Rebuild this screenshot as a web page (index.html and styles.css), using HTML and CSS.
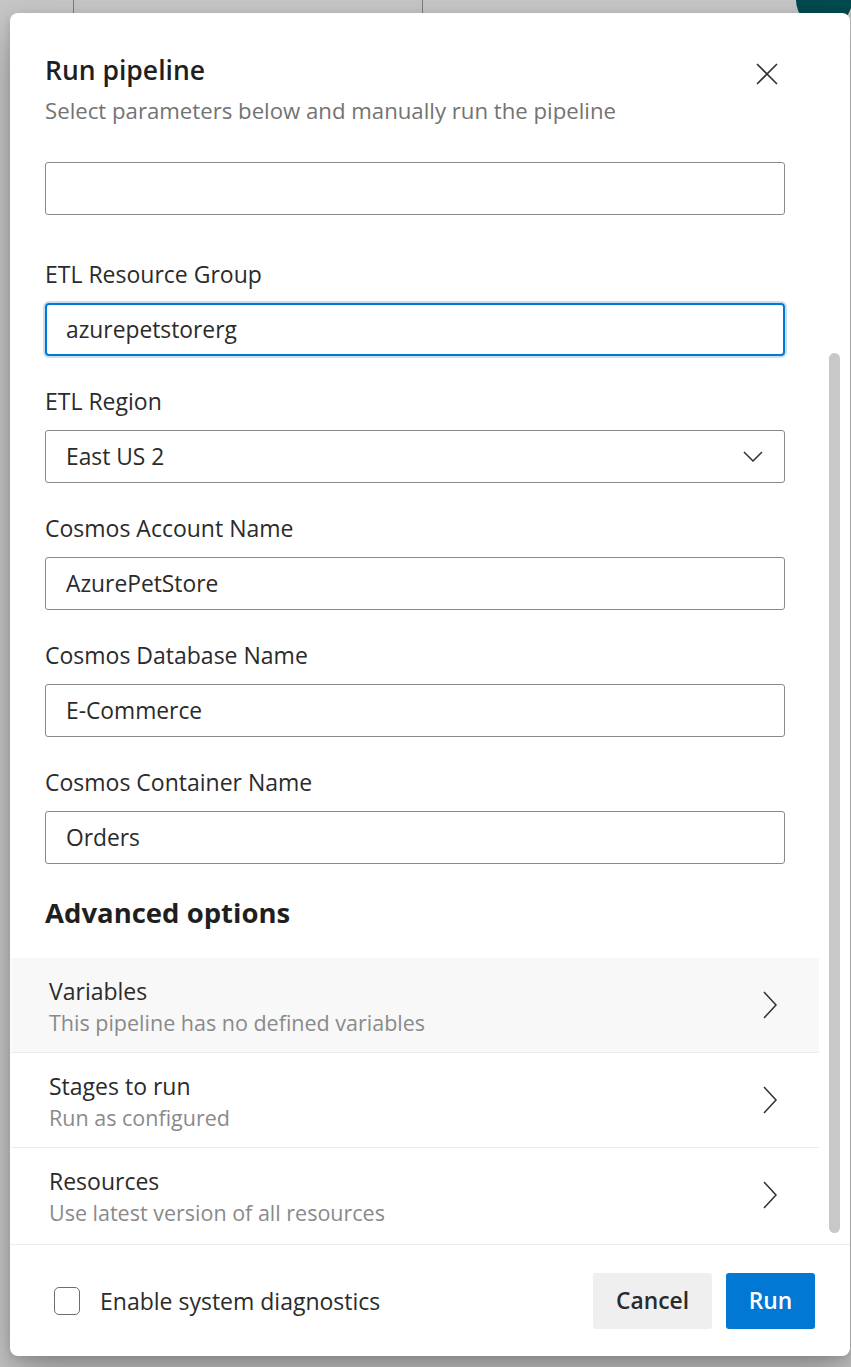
FILE: index.html
```html
<!DOCTYPE html>
<html lang="en">
<head>
<meta charset="utf-8">
<title>Run pipeline</title>
<link rel="stylesheet" href="styles.css">
</head>
<body>
<div class="backdrop">
  <div class="bg-card"></div>
  <div class="bg-avatar"></div>
</div>
<div class="modal" role="dialog" aria-labelledby="dlg-title">
  <header class="modal-header">
    <div class="titles">
      <h1 id="dlg-title" class="title">Run pipeline</h1>
      <p class="subtitle">Select parameters below and manually run the pipeline</p>
    </div>
    <button class="close" aria-label="Close">
      <svg width="22" height="22" viewBox="0 0 22 22"><path d="M1 1 L21 21 M21 1 L1 21" stroke="#323130" stroke-width="1.6" fill="none"/></svg>
    </button>
  </header>

  <div class="modal-body">
    <div class="fields">
      <div class="field first">
        <div class="input"></div>
      </div>
      <div class="field">
        <label class="label">ETL Resource Group</label>
        <div class="input focused">azurepetstorerg</div>
      </div>
      <div class="field">
        <label class="label">ETL Region</label>
        <div class="input select">East US 2
          <svg class="chev-down" width="20" height="11" viewBox="0 0 20 11"><path d="M1 1 L10 10 L19 1" stroke="#323130" stroke-width="1.5" fill="none"/></svg>
        </div>
      </div>
      <div class="field">
        <label class="label">Cosmos Account Name</label>
        <div class="input">AzurePetStore</div>
      </div>
      <div class="field">
        <label class="label">Cosmos Database Name</label>
        <div class="input">E-Commerce</div>
      </div>
      <div class="field">
        <label class="label">Cosmos Container Name</label>
        <div class="input">Orders</div>
      </div>
      <h2 class="section">Advanced options</h2>
    </div>
    <ul class="rows">
      <li class="row hover">
        <div class="row-text">
          <div class="row-title">Variables</div>
          <div class="row-sub">This pipeline has no defined variables</div>
        </div>
        <svg class="chev-right" width="16" height="28" viewBox="0 0 16 28"><path d="M2 1 L14 14 L2 27" stroke="#323130" stroke-width="1.5" fill="none"/></svg>
      </li>
      <li class="row">
        <div class="row-text">
          <div class="row-title">Stages to run</div>
          <div class="row-sub">Run as configured</div>
        </div>
        <svg class="chev-right" width="16" height="28" viewBox="0 0 16 28"><path d="M2 1 L14 14 L2 27" stroke="#323130" stroke-width="1.5" fill="none"/></svg>
      </li>
      <li class="row">
        <div class="row-text">
          <div class="row-title">Resources</div>
          <div class="row-sub">Use latest version of all resources</div>
        </div>
        <svg class="chev-right" width="16" height="28" viewBox="0 0 16 28"><path d="M2 1 L14 14 L2 27" stroke="#323130" stroke-width="1.5" fill="none"/></svg>
      </li>
    </ul>
  </div>
  <div class="scrollbar"></div>

  <footer class="modal-footer">
    <label class="check">
      <span class="box"></span>
      <span class="check-label">Enable system diagnostics</span>
    </label>
    <div class="buttons">
      <button class="btn cancel">Cancel</button>
      <button class="btn primary">Run</button>
    </div>
  </footer>
</div>
</body>
</html>
```

FILE: styles.css
```css
* { box-sizing: border-box; }
html, body { margin: 0; padding: 0; }
body {
  width: 851px;
  height: 1367px;
  overflow: hidden;
  position: relative;
  background: #c6c6c6;
  font-family: "Open Sans", "Noto Sans", sans-serif;
  color: #2b2b2b;
}
.backdrop { position: absolute; inset: 0; }
.bg-card {
  position: absolute;
  left: 73px; top: -20px;
  width: 350px; height: 40px;
  border: 1px solid #7d7d7d;
  border-radius: 6px;
}
.bg-avatar {
  position: absolute;
  left: 796px; top: -28px;
  width: 56px; height: 56px;
  border-radius: 50%;
  background: #004a4f;
}
.modal {
  position: absolute;
  left: 10px; top: 13px;
  width: 840px; height: 1343px;
  background: #fff;
  border-radius: 8px;
  box-shadow: 0 20px 40px rgba(0,0,0,0.28), 0 2px 8px rgba(0,0,0,0.12);
  display: flex;
  flex-direction: column;
  overflow: hidden;
}
.modal-header {
  display: flex;
  justify-content: space-between;
  align-items: flex-start;
  padding: 39px 72px 0 35px;
  height: 127px;
  flex: none;
}
.title {
  margin: 0;
  font-size: 26.5px;
  font-weight: 600;
  line-height: 36px;
  color: #1f1f1f;
}
.subtitle {
  margin: 8px 0 0;
  font-size: 22.2px;
  line-height: 30px;
  color: #737373;
}
.close {
  margin-top: 11px;
  background: none;
  border: 0;
  padding: 0;
  width: 22px; height: 22px;
}
.close svg { display: block; }
.modal-body {
  flex: 1;
  width: 808px;
  margin-left: 1px;
  overflow: hidden;
}
.fields { padding: 22px 34px 0; }
.field { margin-bottom: 31px; }
.field.first { margin-bottom: 45px; }
.label {
  display: block;
  font-size: 23px;
  line-height: 28px;
  color: #2b2b2b;
  margin-bottom: 15px;
}
.input {
  height: 53px;
  border: 1px solid #8a8a8a;
  border-radius: 3px;
  padding: 0 20px;
  display: flex;
  align-items: center;
  font-size: 22.8px;
  color: #2b2b2b;
}
.input.focused {
  border: 2px solid #0078d4;
  padding: 0 19px;
  box-shadow: 0 0 0 2px #c7e0f4;
  border-radius: 4px;
}
.input.select { justify-content: space-between; padding-right: 21px; }
.chev-down { display: block; }
.section {
  margin: 1px 0 0;
  font-size: 27.5px;
  font-weight: 700;
  line-height: 36px;
  color: #1f1f1f;
  padding-bottom: 27px;
}
.rows { list-style: none; margin: 0; padding: 0; }
.row {
  height: 95px;
  display: flex;
  align-items: flex-start;
  justify-content: space-between;
  padding: 18px 41px 0 38px;
  border-bottom: 1px solid #ebebeb;
}
.row:last-child { border-bottom: 0; }
.row.hover { background: #f8f8f8; }
.row-title { font-size: 23px; line-height: 30px; color: #2b2b2b; }
.row-sub { font-size: 21.5px; line-height: 30px; color: #8a8a8a; margin-top: 2px; }
.chev-right { display: block; margin-top: 15px; }
.scrollbar {
  position: absolute;
  left: 819px; top: 340px;
  width: 11px; height: 880px;
  border-radius: 6px;
  background: #c8c8c8;
}
.modal-footer {
  flex: none;
  height: 112px;
  border-top: 1px solid #ebebeb;
  display: flex;
  align-items: center;
  justify-content: space-between;
  padding: 0 35px 0 44px;
}
.check { display: flex; align-items: center; gap: 20px; }
.box {
  width: 26px; height: 28px;
  border: 1px solid #6e6e6e;
  border-radius: 5px;
  background: #fff;
}
.check-label { font-size: 23px; color: #2b2b2b; }
.buttons { display: flex; gap: 14px; }
.btn {
  height: 56px;
  border: 0;
  border-radius: 3px;
  font-family: inherit;
  font-size: 22.8px;
  font-weight: 600;
  padding: 0;
}
.cancel { width: 119px; background: #efefef; color: #2b2b2b; }
.primary { width: 89px; background: #0078d4; color: #fff; }
```
